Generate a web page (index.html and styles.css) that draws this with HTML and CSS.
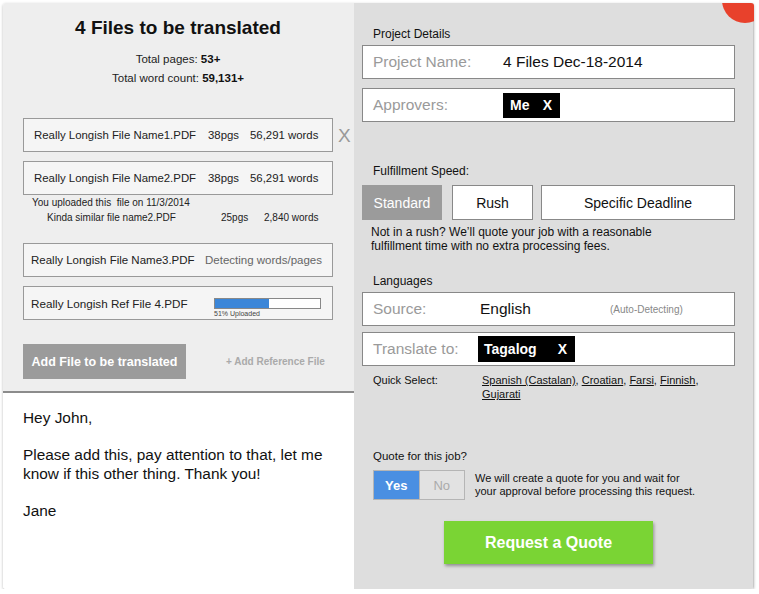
FILE: index.html
```html
<!DOCTYPE html>
<html>
<head>
<meta charset="utf-8">
<link rel="stylesheet" href="styles.css">
</head>
<body>
<div class="card">
  <div class="left">
    <div class="files">
      <h1 class="title">4 Files to be translated</h1>
      <div class="stats">
        <div>Total pages: <b>53+</b></div>
        <div>Total word count: <b>59,131+</b></div>
      </div>
      <div class="file-list">
        <div class="file-row">
          <div class="file-box"><span class="fname">Really Longish File Name1.PDF</span><span class="fpgs">38pgs</span><span>56,291 words</span></div>
          <span class="remove">X</span>
        </div>
        <div class="file-row">
          <div class="file-box"><span class="fname">Really Longish File Name2.PDF</span><span class="fpgs">38pgs</span><span>56,291 words</span></div>
        </div>
        <div class="note">
          <div class="note-line">You uploaded this&nbsp; file on 11/3/2014</div>
          <div class="note-line similar"><span class="sname">Kinda similar file name2.PDF</span><span class="spgs">25pgs</span><span>2,840 words</span></div>
        </div>
        <div class="file-row later">
          <div class="file-box tight"><span class="fname3">Really Longish File Name3.PDF</span><span class="detect">Detecting words/pages</span></div>
        </div>
        <div class="file-row">
          <div class="file-box tight"><span class="fname4">Really Longish Ref File 4.PDF</span>
            <div class="progress">
              <div class="bar"><div class="fill" style="width:51%"></div></div>
              <div class="pct">51% Uploaded</div>
            </div>
          </div>
        </div>
      </div>
      <div class="actions">
        <button class="add-btn">Add File to be translated</button>
        <span class="add-ref">+ Add Reference File</span>
      </div>
    </div>
    <div class="message">
      <p>Hey John,</p>
      <p>Please add this, pay attention to that, let me know if this other thing. Thank you!</p>
      <p>Jane</p>
    </div>
  </div>
  <div class="right">
    <div class="label">Project Details</div>
    <div class="field first">
      <span class="flabel wide">Project Name:</span><span class="fvalue">4 Files Dec-18-2014</span>
    </div>
    <div class="field gap9">
      <span class="flabel wide">Approvers:</span><span class="tag me">Me<span class="tx">X</span></span>
    </div>
    <div class="label speed-label">Fulfillment Speed:</div>
    <div class="speeds">
      <div class="speed active standard">Standard</div>
      <div class="speed rush">Rush</div>
      <div class="speed deadline">Specific Deadline</div>
    </div>
    <div class="rush-note">Not in a rush? We’ll quote your job with a reasonable<br>fulfillment time with no extra processing fees.</div>
    <div class="label lang-label">Languages</div>
    <div class="field first">
      <span class="flabel narrow">Source:</span><span class="fvalue english">English</span><span class="auto">(Auto-Detecting)</span>
    </div>
    <div class="field gap6">
      <span class="flabel narrow">Translate to:</span><span class="tag tagalog">Tagalog<span class="tx">X</span></span>
    </div>
    <div class="quick">
      <span class="qlabel">Quick Select:</span>
      <span class="qlinks"><a>Spanish (Castalan)</a>, <a>Croatian</a>, <a>Farsi</a>, <a>Finnish</a>,<br><a>Gujarati</a></span>
    </div>
    <div class="quote-label">Quote for this job?</div>
    <div class="quote-row">
      <div class="toggle"><span class="yes">Yes</span><span class="no">No</span></div>
      <div class="quote-text">We will create a quote for you and wait for<br>your approval before processing this request.</div>
    </div>
    <button class="request">Request a Quote</button>
  </div>
  <div class="dot"></div>
</div>
</body>
</html>
```

FILE: styles.css
```css
* { box-sizing: border-box; }
html, body { margin: 0; padding: 0; background: #ffffff; }
body {
  font-family: "Liberation Sans", Arial, Helvetica, sans-serif;
  color: #111;
  padding: 3px 0 0 3px;
}
.card {
  position: relative;
  width: 751px;
  height: 586px;
  display: flex;
  overflow: hidden;
  border-radius: 3px;
  box-shadow: 0 1px 3px rgba(0,0,0,0.28);
}
.left {
  width: 351px;
  display: flex;
  flex-direction: column;
}
.files {
  height: 390px;
  background: #eeeeee;
  border-bottom: 2px solid #8c8c8c;
  padding: 14px 0 0 20px;
}
.title {
  margin: 0;
  width: 310px;
  text-align: center;
  font-size: 19px;
  line-height: 22px;
  font-weight: bold;
  color: #111;
}
.stats {
  margin-top: 11px;
  width: 310px;
  text-align: center;
  font-size: 11.5px;
  line-height: 19px;
  color: #222;
}
.stats b { color: #111; }
.file-list {
  margin-top: 30px;
  display: flex;
  flex-direction: column;
  gap: 9px;
}
.file-row {
  display: flex;
  align-items: center;
}
.file-row.later { margin-top: 9px; }
.file-box {
  width: 310px;
  height: 34px;
  border: 1px solid #999;
  background: #f5f5f5;
  display: flex;
  align-items: center;
  padding-left: 10px;
  font-size: 11.4px;
  color: #222;
}
.file-box.tight { padding-left: 7px; }
.fname { width: 174px; }
.fpgs { width: 42px; }
.fname3 { width: 174px; font-size: 11.5px; }
.fname4 { width: 183px; font-size: 11.7px; }
.detect { color: #666; font-size: 11.5px; }
.remove {
  margin-left: 5px;
  font-size: 19px;
  color: #999;
  line-height: 1;
}
.note {
  margin-top: -9px;
  font-size: 10px;
  line-height: 15px;
  color: #222;
}
.note-line { padding-left: 9px; }
.note-line.similar { padding-left: 24px; display: flex; }
.sname { width: 174px; }
.spgs { width: 43px; }
.progress {
  position: relative;
  top: 5px;
}
.bar {
  width: 107px;
  height: 11px;
  border: 1px solid #888;
  background: #fff;
}
.fill { height: 100%; background: #3b86d8; }
.pct {
  font-size: 7px;
  line-height: 10px;
  color: #444;
}
.actions {
  margin-top: 24px;
  display: flex;
  align-items: center;
}
.add-btn {
  width: 163px;
  height: 35px;
  border: none;
  background: #9b9b9b;
  color: #fff;
  font-family: inherit;
  font-weight: bold;
  font-size: 12.5px;
  padding: 0;
}
.add-ref {
  margin-left: 40px;
  font-size: 10px;
  font-weight: bold;
  color: #aaa;
}
.message {
  flex: 1;
  background: #fff;
  padding: 16px 0 0 20px;
  font-size: 15.4px;
  line-height: 18.5px;
  color: #111;
}
.message p { margin: 0 0 18.5px; width: 320px; }
.right {
  width: 400px;
  background: #dedede;
  padding: 23px 0 0 8px;
  border-right: 1px solid #c8c8c8;
}
.label {
  margin-left: 11px;
  font-size: 12px;
  line-height: 16px;
  color: #111;
}
.field {
  width: 373px;
  height: 34px;
  background: #fff;
  border: 1px solid #888;
  display: flex;
  align-items: center;
  padding-left: 10px;
  font-size: 15.5px;
}
.field.first { margin-top: 3px; }
.field.gap9 { margin-top: 9px; }
.field.gap6 { margin-top: 6px; }
.flabel { color: #9a9a9a; }
.flabel.wide { width: 130px; }
.flabel.narrow { width: 107px; }
.fvalue { color: #111; }
.english { width: 130px; }
.auto { font-size: 10px; color: #888; }
.tag {
  background: #000;
  color: #fff;
  font-weight: bold;
  font-size: 14px;
  display: inline-flex;
  align-items: center;
  justify-content: space-between;
}
.tag.me { width: 57px; height: 25px; padding: 0 8px 0 7px; }
.tag.tagalog { width: 97px; height: 26px; padding: 0 8px 0 6px; margin-left: -2px; }
.speed-label { margin-top: 41px; }
.speeds {
  margin-top: 6px;
  display: flex;
  height: 35px;
}
.speed {
  display: flex;
  align-items: center;
  justify-content: center;
  font-size: 14px;
  background: #fff;
  border: 1px solid #888;
  color: #111;
}
.speed.standard { width: 80px; background: #9b9b9b; color: #fff; border: none; }
.speed.rush { width: 81px; margin-left: 10px; }
.speed.deadline { width: 194px; margin-left: 8px; }
.rush-note {
  margin: 5px 0 0 9px;
  font-size: 12px;
  line-height: 14px;
  color: #111;
}
.lang-label { margin-top: 20px; }
.quick {
  margin: 7px 0 0 11px;
  display: flex;
  font-size: 11px;
  line-height: 14px;
  color: #111;
}
.qlabel { width: 109px; }
.qlinks a { text-decoration: underline; color: #111; }
.quote-label {
  margin: 48px 0 0 11px;
  font-size: 11.5px;
  line-height: 14px;
  color: #111;
}
.quote-row {
  margin: 7px 0 0 11px;
  display: flex;
  align-items: center;
}
.toggle {
  display: flex;
  height: 30px;
  width: 92px;
  border: 1px solid #b5b5b5;
}
.toggle span {
  flex: 1;
  display: flex;
  align-items: center;
  justify-content: center;
  font-size: 13px;
}
.yes { background: #4a8fe2; color: #fff; font-weight: bold; }
.no { background: #e2e2e2; color: #aaa; border-left: 1px solid #b5b5b5; }
.quote-text {
  margin-left: 10px;
  font-size: 11px;
  line-height: 13px;
  color: #111;
}
.request {
  display: block;
  margin: 21px 0 0 82px;
  width: 209px;
  height: 43px;
  border: none;
  background: #7ad434;
  color: #fff;
  font-family: inherit;
  font-weight: bold;
  font-size: 16px;
  box-shadow: 1px 2px 3px rgba(0,0,0,0.35);
  padding: 0;
}
.dot {
  position: absolute;
  left: 719px;
  top: -26px;
  width: 46px;
  height: 46px;
  border-radius: 50%;
  background: #e8412c;
}
```
